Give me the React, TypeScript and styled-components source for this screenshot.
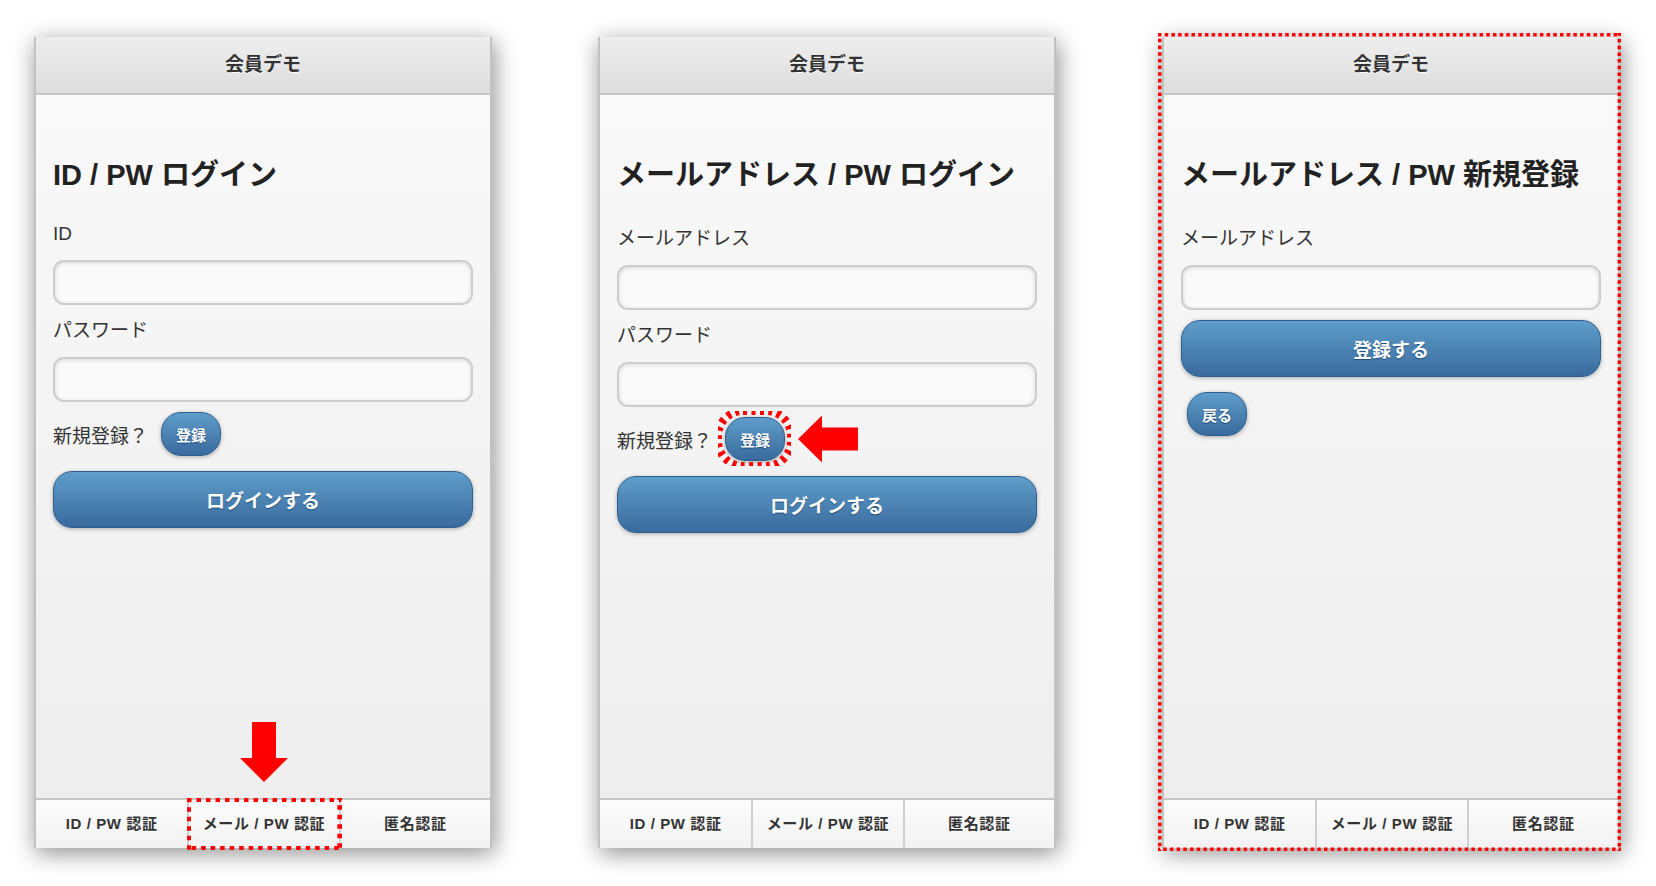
import React from 'react';
import styled, { createGlobalStyle } from 'styled-components';

const GlobalStyle = createGlobalStyle`
  html, body {
    margin: 0;
    padding: 0;
    background: #ffffff;
  }
  body {
    font-family: 'Liberation Sans', 'Noto Sans CJK JP', sans-serif;
  }
`;

const Page = styled.div`
  display: flex;
  gap: 106px;
  box-sizing: border-box;
  width: 1656px;
  height: 886px;
  padding: 37px 0 0 34px;
`;

const StyledScreen = styled.section`
  position: relative;
  box-sizing: border-box;
  width: 458px;
  height: 811px;
  display: flex;
  flex-direction: column;
  border-left: 2px solid #c2c2c2;
  border-right: 2px solid #c2c2c2;
  box-shadow: 2px 5px 22px rgba(0, 0, 0, 0.45);
`;

const Header = styled.header`
  box-sizing: border-box;
  height: 58px;
  padding-bottom: 6px;
  display: flex;
  align-items: center;
  justify-content: center;
  background: linear-gradient(#eeeeee, #dddddd);
  border-bottom: 2px solid #c4c4c4;
  color: #333333;
  font-size: 19px;
  font-weight: bold;
  text-shadow: 0 1px 0 #ffffff;
`;

const Content = styled.main`
  flex: 1;
  padding: 56px 17px 0;
  background: linear-gradient(#f9f9f9, #eeeeee);
`;

const Title = styled.h2`
  margin: 0 0 30px;
  color: #222222;
  font-size: 29px;
  font-weight: bold;
  line-height: normal;
  text-shadow: 0 1px 0 #ffffff;
`;

const FieldLabel = styled.label`
  display: block;
  margin: 0 0 15px;
  color: #333333;
  font-size: 19px;
  line-height: normal;
`;

const TextInput = styled.input`
  display: block;
  box-sizing: border-box;
  width: 100%;
  height: 45px;
  margin: 0 0 10px;
  border: 2px solid #cdcdcd;
  border-radius: 11px;
  background: #fafafa;
  box-shadow: inset 0 1px 4px rgba(0, 0, 0, 0.14);
  outline: none;
`;

const ButtonRow = styled.div<{ $top: number }>`
  display: flex;
  align-items: center;
  margin-top: ${({ $top }) => $top}px;
  color: #333333;
  font-size: 19px;
`;

const MarkedSpot = styled.span<{ $offset: number }>`
  position: relative;
  display: inline-flex;
  margin-left: ${({ $offset }) => $offset}px;
`;

const blueFace = `
  border: 1px solid #2d5f8d;
  background: linear-gradient(#5f9dca, #396a9d);
  color: #ffffff;
  font-family: 'Liberation Sans', 'Noto Sans CJK JP', sans-serif;
  font-weight: bold;
  text-shadow: 0 1px 1px #1d4a78;
  box-shadow: 0 1px 4px rgba(0, 0, 0, 0.3);
  cursor: pointer;
`;

const MiniButton = styled.button`
  ${blueFace}
  box-sizing: border-box;
  height: 44px;
  padding: 0 14px;
  border-radius: 20px;
  font-size: 15px;
`;

const WideButton = styled.button<{ $gap: number }>`
  ${blueFace}
  display: block;
  box-sizing: border-box;
  width: 100%;
  height: 57px;
  margin-top: ${({ $gap }) => $gap}px;
  border-radius: 19px;
  font-size: 19px;
`;

const TabBar = styled.nav`
  display: grid;
  grid-template-columns: repeat(3, 1fr);
  height: 48px;
  border-top: 2px solid #c6c6c6;
`;

const Tab = styled.div`
  position: relative;
  box-sizing: border-box;
  display: flex;
  align-items: center;
  justify-content: center;
  padding-bottom: 3px;
  background: linear-gradient(#fcfcfc, #f2f2f2);
  color: #333333;
  font-size: 15px;
  font-weight: bold;
  letter-spacing: 0.6px;
  text-shadow: 0 1px 0 #ffffff;

  & + & {
    border-left: 2px solid #cfcfcf;
  }
`;

const FrameBox = styled.span<{ $inset: string }>`
  position: absolute;
  inset: ${({ $inset }) => $inset};
  z-index: 3;
  pointer-events: none;

  svg {
    display: block;
    width: 100%;
    height: 100%;
  }
`;

const ArrowBox = styled.span<{ $dir: 'down' | 'left' }>`
  position: absolute;
  z-index: 3;
  display: block;
  ${({ $dir }) =>
    $dir === 'down'
      ? 'bottom: calc(100% + 18px); left: 50%; transform: translateX(-50%);'
      : 'left: calc(100% + 13px); top: 50%; transform: translateY(-50%);'}

  svg {
    display: block;
  }
`;

type FrameProps = { inset: string; radius?: number; stroke?: number; dash?: string };

// red dotted marker drawn on top of the screenshot
const DottedFrame = ({ inset, radius = 0, stroke = 4, dash = '4 4.5' }: FrameProps) => (
  <FrameBox $inset={inset}>
    <svg>
      <rect
        x="0"
        y="0"
        width="100%"
        height="100%"
        rx={radius}
        fill="none"
        stroke="#ff0000"
        strokeWidth={stroke * 2}
        strokeDasharray={dash}
      />
    </svg>
  </FrameBox>
);

const DownArrow = () => (
  <ArrowBox $dir="down">
    <svg width="48" height="60" viewBox="0 0 48 60">
      <polygon points="12,0 36,0 36,36 48,36 24,60 0,36 12,36" fill="#ff0000" />
    </svg>
  </ArrowBox>
);

const LeftArrow = () => (
  <ArrowBox $dir="left">
    <svg width="60" height="47" viewBox="0 0 60 47">
      <polygon points="0,23.5 24,0 24,12 60,12 60,35 24,35 24,47" fill="#ff0000" />
    </svg>
  </ArrowBox>
);

const TABS = ['ID / PW 認証', 'メール / PW 認証', '匿名認証'];

type ScreenProps = {
  title: string;
  children: React.ReactNode;
  markTab?: number;
  framed?: boolean;
};

const MemberScreen = ({ title, children, markTab, framed }: ScreenProps): JSX.Element => (
  <StyledScreen>
    <Header>会員デモ</Header>
    <Content>
      <Title>{title}</Title>
      {children}
    </Content>
    <TabBar>
      {TABS.map((label, i) => (
        <Tab key={label}>
          {label}
          {markTab === i && (
            <>
              <DottedFrame inset="-2px -3px -2px -2px" dash="4.5 5" />
              <DownArrow />
            </>
          )}
        </Tab>
      ))}
    </TabBar>
    {framed && <DottedFrame inset="-4px -3px -3px -6px" stroke={3.5} dash="3.5 3.2" />}
  </StyledScreen>
);

const App = (): JSX.Element => (
  <>
    <GlobalStyle />
    <Page>
      <MemberScreen title="ID / PW ログイン" markTab={1}>
        <FieldLabel>ID</FieldLabel>
        <TextInput type="text" />
        <FieldLabel>パスワード</FieldLabel>
        <TextInput type="password" />
        <ButtonRow $top={8}>
          新規登録？
          <MarkedSpot $offset={13}>
            <MiniButton>登録</MiniButton>
          </MarkedSpot>
        </ButtonRow>
        <WideButton $gap={15}>ログインする</WideButton>
      </MemberScreen>

      <MemberScreen title="メールアドレス / PW ログイン">
        <FieldLabel>メールアドレス</FieldLabel>
        <TextInput type="email" />
        <FieldLabel>パスワード</FieldLabel>
        <TextInput type="password" />
        <ButtonRow $top={8}>
          新規登録？
          <MarkedSpot $offset={13}>
            <MiniButton>登録</MiniButton>
            <DottedFrame inset="-6px -6px -5px -7px" radius={25} dash="4 4.5" />
            <LeftArrow />
          </MarkedSpot>
        </ButtonRow>
        <WideButton $gap={15}>ログインする</WideButton>
      </MemberScreen>

      <MemberScreen title="メールアドレス / PW 新規登録" framed>
        <FieldLabel>メールアドレス</FieldLabel>
        <TextInput type="email" />
        <WideButton $gap={0}>登録する</WideButton>
        <ButtonRow $top={15}>
          <MarkedSpot $offset={6}>
            <MiniButton>戻る</MiniButton>
          </MarkedSpot>
        </ButtonRow>
      </MemberScreen>
    </Page>
  </>
);

export default App;
